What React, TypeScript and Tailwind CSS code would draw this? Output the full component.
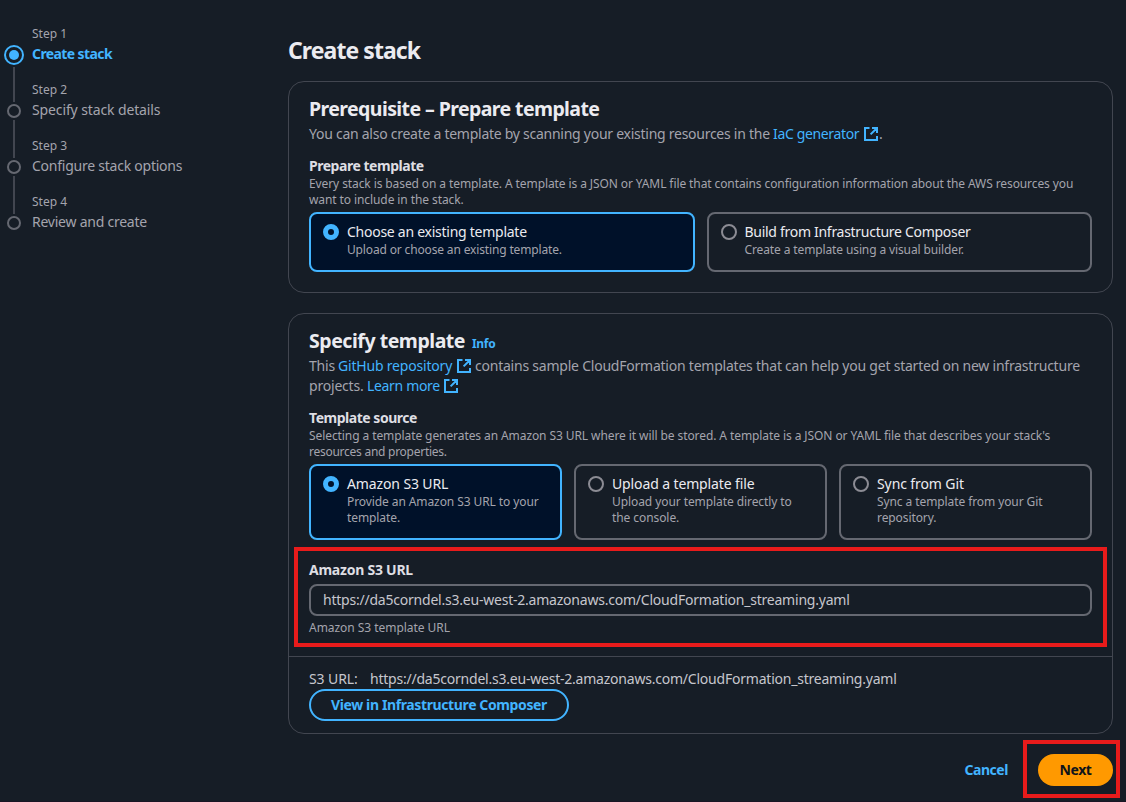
import type { ReactNode } from "react";

function ExternalIcon() {
  return (
    <svg viewBox="0 0 16 16" className="h-4 w-4 shrink-0" fill="none" stroke="#42b4ff" strokeWidth="2">
      <path d="M9 2h5v5M7.6 8.4 14 2M14 10v4H2V2h4.5" />
    </svg>
  );
}

function Radio({ selected }: { selected?: boolean }) {
  return selected ? (
    <span className="h-4 w-4 shrink-0 rounded-full border-[5px] border-[#42b4ff] bg-[#001129]" />
  ) : (
    <span className="h-4 w-4 shrink-0 rounded-full border-2 border-[#8c8c94]" />
  );
}

type TileProps = { selected?: boolean; title: string; titleClass: string; children: ReactNode };

function Tile({ selected, title, titleClass, children }: TileProps) {
  return (
    <div
      className={
        "flex flex-1 gap-2 rounded-lg border-2 px-3 pt-2 pb-3 whitespace-nowrap " +
        (selected ? "border-[#42b4ff] bg-[#001129]" : "border-[#656871]")
      }
    >
      <div className="flex h-5 items-center">
        <Radio selected={selected} />
      </div>
      <div>
        <div className={"text-sm leading-5 text-[#ebebf0] " + titleClass}>{title}</div>
        <div className="text-xs leading-4 text-[#a4a4ad]">{children}</div>
      </div>
    </div>
  );
}

type Step = { title: string; tracking: string };

const steps: Step[] = [
  { title: "Create stack", tracking: "tracking-[-0.6px]" },
  { title: "Specify stack details", tracking: "tracking-[-0.12px]" },
  { title: "Configure stack options", tracking: "tracking-[-0.24px]" },
  { title: "Review and create", tracking: "tracking-[-0.24px]" },
];

function StepNav() {
  return (
    <nav className="w-[288px] shrink-0 pt-[26px] pl-1">
      {steps.map((step, i) => (
        <div key={step.title} className="flex h-14 gap-2">
          <div className="flex w-5 flex-col items-center">
            {i === 0 ? (
              <>
                <span className="mt-[19px] flex h-5 w-5 shrink-0 items-center justify-center rounded-full border-2 border-[#42b4ff]">
                  <span className="h-2.5 w-2.5 rounded-full bg-[#42b4ff]" />
                </span>
                <span className="mt-0.5 w-0.5 grow bg-[#424650]" />
              </>
            ) : (
              <>
                <span className="h-5 w-0.5 shrink-0 bg-[#424650]" />
                <span className="mt-[2px] h-3.5 w-3.5 shrink-0 rounded-full border-2 border-[#656871]" />
                {i < steps.length - 1 && <span className="mt-0.5 w-0.5 grow bg-[#424650]" />}
              </>
            )}
          </div>
          <div className="whitespace-nowrap text-[#a4a4ad]">
            <div className="text-xs leading-4">Step {i + 1}</div>
            <div
              className={
                "mt-0.5 text-sm leading-5 " +
                step.tracking +
                (i === 0 ? " font-bold text-[#42b4ff]" : "")
              }
            >
              {step.title}
            </div>
          </div>
        </div>
      ))}
    </nav>
  );
}

export default function App() {
  return (
    <div className="flex h-[802px] w-[1126px] overflow-hidden border-b border-[#191524] bg-[#161d26] font-['Noto_Sans','Open_Sans',sans-serif] text-sm leading-5 text-[#c6c6cd]">
      <StepNav />
      <main className="w-[825px] shrink-0 whitespace-nowrap">
        <h1 className="pt-[35px] text-[23px] leading-[30px] font-bold tracking-[-0.93px] text-[#ebebf0]">
          Create stack
        </h1>

        <section className="mt-4 h-[212px] rounded-2xl border border-[#424650] px-5 pt-[15px]">
          <h2 className="text-[19.5px] leading-6 font-bold tracking-[-0.59px] text-[#ebebf0]">
            Prerequisite – Prepare template
          </h2>
          <p className="mt-[3px] flex items-center text-[#a4a4ad]">
            <span className="w-[464px] tracking-[-0.262px]">
              You can also create a template by scanning your existing resources in the
            </span>
            <span className="w-[90px] tracking-[-0.35px] text-[#42b4ff]">IaC generator</span>
            <ExternalIcon />.
          </p>
          <h3 className="mt-3 font-bold tracking-[-0.47px] text-[#dedee3]">Prepare template</h3>
          <p className="text-xs leading-4 tracking-[-0.098px] text-[#a4a4ad]">
            Every stack is based on a template. A template is a JSON or YAML file that contains configuration
            information about the AWS resources you
            <br />
            <span className="tracking-[-0.09px]">want to include in the stack.</span>
          </p>
          <div className="mt-1 flex gap-3">
            <Tile selected title="Choose an existing template" titleClass="tracking-[-0.26px]">
              <span className="tracking-[-0.15px]">Upload or choose an existing template.</span>
            </Tile>
            <Tile title="Build from Infrastructure Composer" titleClass="tracking-[-0.29px]">
              <span className="tracking-[-0.12px]">Create a template using a visual builder.</span>
            </Tile>
          </div>
        </section>

        <section className="mt-5 h-[421px] rounded-2xl border border-[#424650]">
          <div className="relative h-[343px] border-b border-[#424650] px-5 pt-[15px]">
            <div className="flex items-baseline gap-2">
              <h2 className="w-[155px] text-[19.5px] leading-6 font-bold tracking-[-0.46px] text-[#ebebf0]">
                Specify template
              </h2>
              <span className="text-xs leading-4 font-bold tracking-[-0.3px] text-[#42b4ff]">Info</span>
            </div>
            <div className="mt-[3px] text-[#a4a4ad]">
              <p className="flex items-center">
                <span className="w-[29px] tracking-[-0.2px]">This</span>
                <span className="w-[118px] tracking-[-0.19px] text-[#42b4ff]">GitHub repository</span>
                <ExternalIcon />
                <span className="ml-[3px] tracking-[-0.226px]">
                  contains sample CloudFormation templates that can help you get started on new infrastructure
                </span>
              </p>
              <p className="flex items-center">
                <span className="w-[58px] tracking-[-0.2px]">projects.</span>
                <span className="w-[76px] tracking-[-0.33px] text-[#42b4ff]">Learn more</span>
                <ExternalIcon />
              </p>
            </div>
            <h3 className="mt-3 font-bold tracking-[-0.47px] text-[#dedee3]">Template source</h3>
            <p className="text-xs leading-4 tracking-[-0.086px] text-[#a4a4ad]">
              Selecting a template generates an Amazon S3 URL where it will be stored. A template is a JSON or
              YAML file that describes your stack's
              <br />
              <span className="tracking-[-0.26px]">resources and properties.</span>
            </p>
            <div className="mt-1 flex gap-3">
              <Tile selected title="Amazon S3 URL" titleClass="tracking-[-0.12px]">
                <span className="tracking-[-0.09px]">
                  Provide an Amazon S3 URL to your
                  <br />
                  template.
                </span>
              </Tile>
              <Tile title="Upload a template file" titleClass="tracking-[-0.12px]">
                <span className="tracking-[-0.08px]">
                  Upload your template directly to
                  <br />
                  the console.
                </span>
              </Tile>
              <Tile title="Sync from Git" titleClass="tracking-[-0.1px]">
                <span className="tracking-[-0.09px]">
                  Sync a template from your Git
                  <br />
                  repository.
                </span>
              </Tile>
            </div>
            <div className="mt-5 font-bold tracking-[-0.24px] text-[#dedee3]">Amazon S3 URL</div>
            <div className="mt-1 flex h-8 items-center rounded-lg border-2 border-[#656871] px-3 tracking-[-0.22px]">
              https://da5corndel.s3.eu-west-2.amazonaws.com/CloudFormation_streaming.yaml
            </div>
            <div className="mt-1 text-xs leading-4 tracking-[-0.04px] text-[#a4a4ad]">Amazon S3 template URL</div>
            <div className="pointer-events-none absolute top-[233px] left-[5px] h-[100px] w-[813px] border-4 border-[#e81b1b]" />
          </div>
          <div className="px-5 pt-3">
            <div className="flex">
              <span className="w-[61px] tracking-[-0.1px]">S3 URL:</span>
              <span className="tracking-[-0.22px]">
                https://da5corndel.s3.eu-west-2.amazonaws.com/CloudFormation_streaming.yaml
              </span>
            </div>
            <button className="flex h-8 w-[260px] items-center justify-center rounded-full border-2 border-[#42b4ff] font-bold tracking-[-0.38px] text-[#42b4ff]">
              View in Infrastructure Composer
            </button>
          </div>
        </section>

        <div className="mt-5 flex items-center justify-end gap-[30px]">
          <span className="font-bold tracking-[-0.45px] text-[#42b4ff]">Cancel</span>
          <div className="relative">
            <button className="flex h-8 w-[75px] items-center justify-center rounded-full bg-[#ff9900] font-bold tracking-[-0.45px] text-[#0f141a]">
              Next
            </button>
            <div className="pointer-events-none absolute -top-[14px] -left-[15px] h-[58px] w-[97px] border-4 border-[#e81b1b]" />
          </div>
        </div>
      </main>
    </div>
  );
}
